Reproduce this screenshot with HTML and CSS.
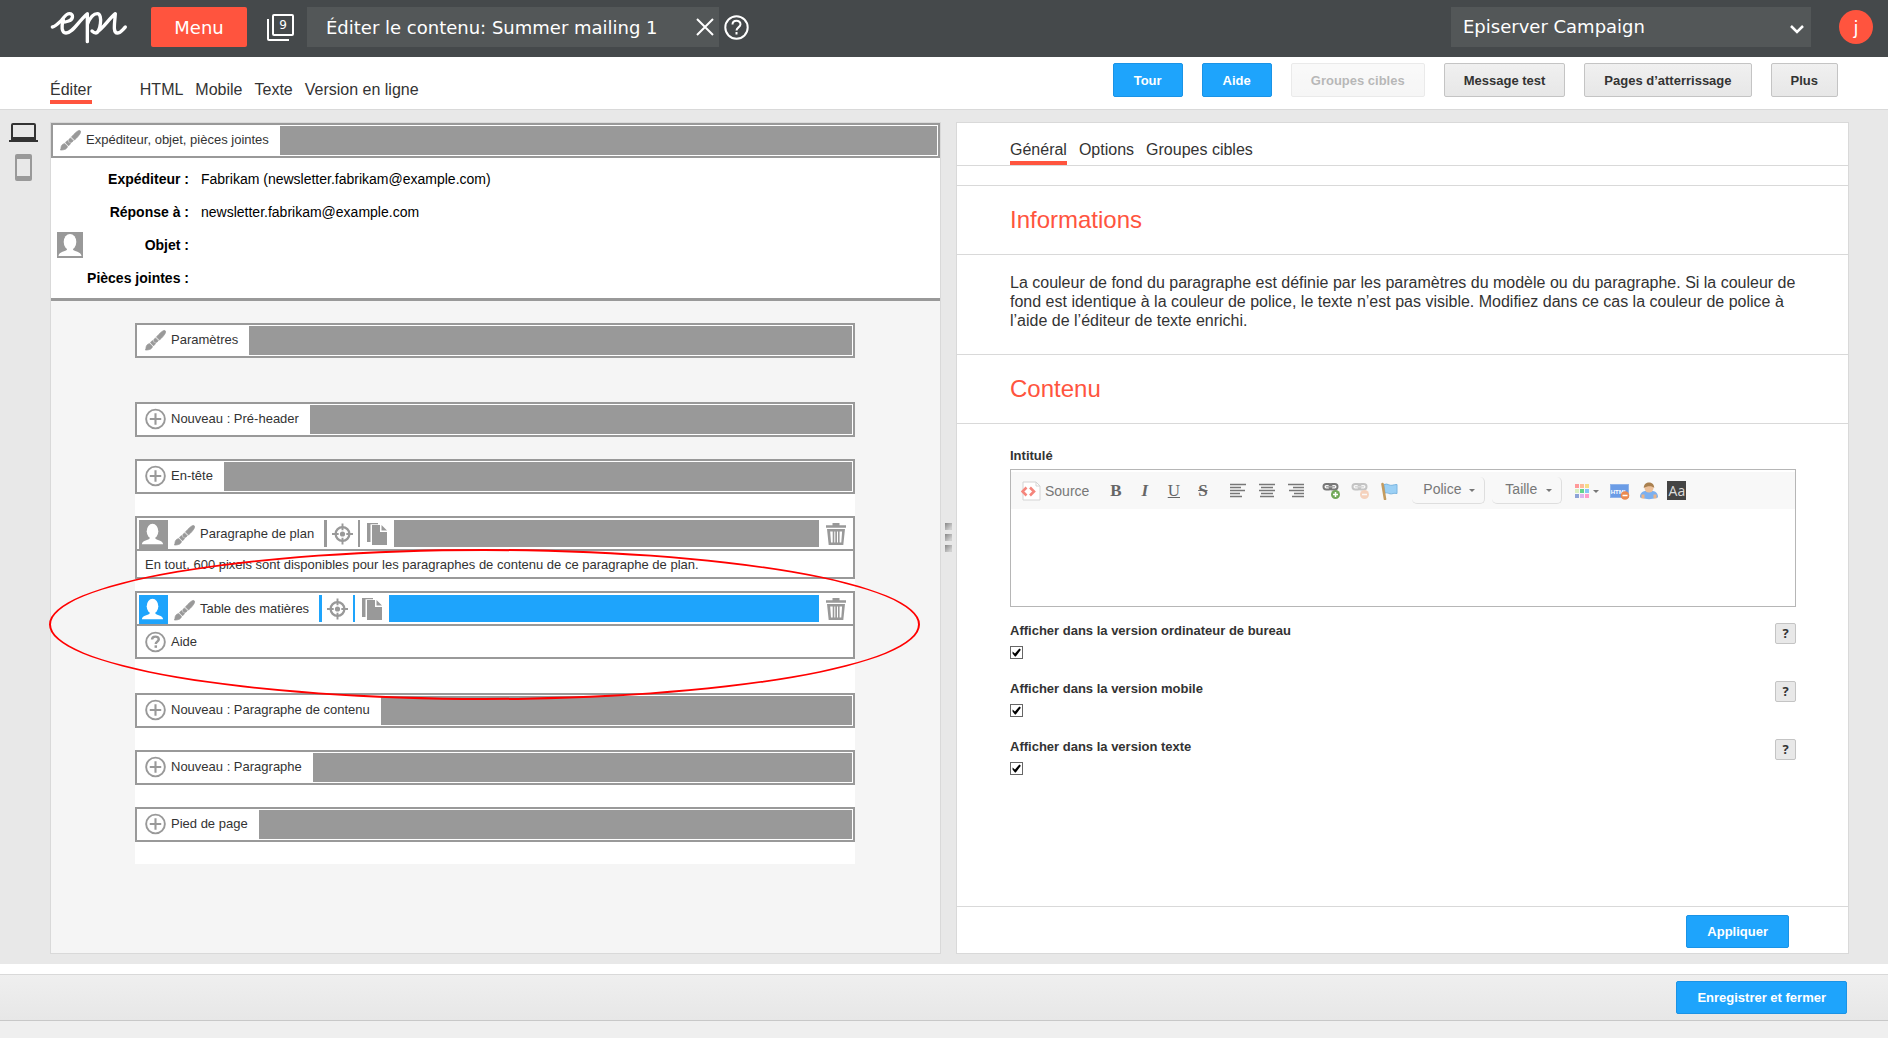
FILE: index.html
```html
<!DOCTYPE html>
<html lang="fr">
<head>
<meta charset="utf-8">
<meta name="viewport" content="width=device-width, initial-scale=1">
<title>Éditer le contenu: Summer mailing 1</title>
<link rel="stylesheet" href="styles.css">
</head>
<body>
<svg class="sprite" aria-hidden="true">
  <symbol id="brush" viewBox="0 0 22 22">
    <g stroke="currentColor" stroke-width=".8" stroke-linejoin="round">
    <path d="M20 1c1.500 0 2 1 1.500 2.200-.8 2.300-3.200 5-6.300 7.800L12 7.800C15 4.500 17.700 1.600 20 1z"/>
    <path d="M11 8.800l3 3-1.400 1.300c-.8.6-2 .5-2.700-.2-.8-.8-.9-2-.2-2.900z"/>
    <path d="M8.300 11.700c.2 1.400 1 2.200 2.600 2.500-.3 1.500-1 2.400-2.200 2.700L5.800 13.900c.5-1.300 1.300-2 2.500-2.200z"/>
    <path d="M5 14.800l2.800 2.900C7.600 20 5 21.500.5 21.500 1.200 20.500.8 19.500 1.300 17.900 1.800 15.900 3.400 14.900 5 14.800z"/>
    </g>
  </symbol>
  <symbol id="plus" viewBox="0 0 22 22">
    <circle cx="11" cy="11" r="9.800" fill="none" stroke="currentColor" stroke-width="2"/>
    <path d="M9.900 5h2.200v4.900H17v2.200h-4.900V17H9.900v-4.900H5V9.900h4.900z"/>
  </symbol>
  <symbol id="question" viewBox="0 0 22 22">
    <circle cx="11" cy="11" r="9.800" fill="none" stroke="currentColor" stroke-width="2"/>
    <path d="M7.400 8.500C7.400 4.300 14.600 4.400 14.400 8.300c-.1 2.300-3.100 2.400-3.100 4.800" fill="none" stroke="currentColor" stroke-width="2.600"/>
    <rect x="10" y="14.500" width="2.600" height="2.600"/>
  </symbol>
  <symbol id="person" viewBox="0 0 26 26">
    <ellipse cx="13" cy="10" rx="6.300" ry="8"/>
    <path d="M10 15h6v2.500c1 2.200 8 1.800 8.500 6.500h-23C2 19.300 9 19.700 10 17.500z"/>
  </symbol>
  <symbol id="target" viewBox="0 0 22 22">
    <circle cx="11" cy="11" r="7.200" fill="none" stroke="currentColor" stroke-width="2.400"/>
    <circle cx="11" cy="11" r="2.700"/>
    <path d="M10 0h2v7h-2zM10 15h2v7h-2zM0 10h7v2H0zM15 10h7v2h-7z"/>
  </symbol>
  <symbol id="copy" viewBox="0 0 20 22">
    <path d="M0 0h11v1.300H3.500V19H0z"/>
    <path d="M5 2h8v7h7v13H5z"/>
    <path d="M14.500 2L20 7.500h-5.500z"/>
  </symbol>
  <symbol id="trash" viewBox="0 0 20 22">
    <path d="M6.500 0h7v2.200H20v2.600H0V2.200h6.500z"/>
    <path fill-rule="evenodd" d="M1 6h18l-1.700 16H2.700zM4.200 8.500l.8 11h1.700v-11zM8.300 8.500v11h1v-11zM11 8.500v11h1v-11zM13.600 8.500v11h1.700l.8-11z"/>
  </symbol>
  <symbol id="chain" viewBox="0 0 18 16">
    <g fill="none" stroke="#777" stroke-width="2">
      <rect x="1.500" y="2" width="8" height="5.500" rx="2.700"/>
      <rect x="7.500" y="2" width="8" height="5.500" rx="2.700"/>
    </g>
    <path d="M4 4.700h9" stroke="#aaa" stroke-width="1.500"/>
  </symbol>
</svg>

<div class="page">
  <header class="topbar">
    <a class="logo" href="#" aria-label="Episerver">
      <svg width="78" height="33" viewBox="0 0 234 99" fill="none" stroke="#fff" stroke-width="10" stroke-linecap="round" stroke-linejoin="round">
        <path d="M7 48C18 46 24 38 34 28 44 17 48 8 58 8c14 0 12 17-2 22-8 3-15 4-20 4M40 26c-6 20-6 40 8 40 20 0 36-34 64-58v84M112 40c8-20 20-32 30-32 18 0 8 58-4 58-6 0-12-6-12-6M140 64C160 52 176 24 196 8c-2 30-8 58 6 58 10 0 14-8 24-18"/>
      </svg>
    </a>
    <button class="menu" type="button">Menu</button>
    <button class="tabs-count" type="button" aria-label="Onglets ouverts">
      <svg width="27" height="27" viewBox="0 0 27 27" fill="none" stroke="#fff" stroke-width="2">
        <rect x="6" y="1" width="20" height="20" rx="1"/>
        <path d="M1 5v20q0 1 1 1h20"/>
        <text class="count" x="16" y="15" text-anchor="middle">9</text>
      </svg>
    </button>
    <div class="current">
      <span>Éditer le contenu: Summer mailing 1</span>
      <button type="button" aria-label="Fermer">
        <svg width="18" height="18" viewBox="0 0 18 18" stroke="#fff" stroke-width="2"><path d="M1 1l16 16M17 1L1 17"/></svg>
      </button>
    </div>
    <button class="tophelp" type="button" aria-label="Aide">
      <svg width="25" height="25" viewBox="0 0 25 25" fill="none" stroke="#fff" stroke-width="2"><circle cx="12.500" cy="12.500" r="11.200"/><path d="M8.500 9.500c0-5 8-5 8-.2 0 3-4 3.200-4 6.200M12.500 17v2.500"/></svg>
    </button>
    <select class="product" aria-label="Produit"><option>Episerver Campaign</option></select>
    <button class="avatar" type="button">j</button>
  </header>

  <div class="subbar">
    <nav class="tabs">
      <a class="active first" href="#">Éditer</a>
      <a href="#">HTML</a>
      <a href="#">Mobile</a>
      <a href="#">Texte</a>
      <a href="#">Version en ligne</a>
    </nav>
    <div class="actions">
      <button class="btn primary" type="button">Tour</button>
      <button class="btn primary" type="button">Aide</button>
      <button class="btn" type="button" disabled>Groupes cibles</button>
      <button class="btn" type="button">Message test</button>
      <button class="btn" type="button">Pages d’atterrissage</button>
      <button class="btn" type="button">Plus</button>
    </div>
  </div>

  <main class="workspace">
    <aside class="devices">
      <button type="button" aria-label="Ordinateur">
        <svg width="29" height="19" viewBox="0 0 29 19"><rect x="3" y="1" width="23" height="14" rx="1" fill="none" stroke="#333" stroke-width="2"/><path d="M2 14h25v3h2v2H0v-2h2z" fill="#333"/></svg>
      </button>
      <button type="button" aria-label="Mobile">
        <svg width="17" height="27" viewBox="0 0 17 27"><path fill="#999" fill-rule="evenodd" d="M2 0h13q2 0 2 2v23q0 2-2 2H2q-2 0-2-2V2q0-2 2-2zM2 5v17h13V5z"/></svg>
      </button>
    </aside>

    <section class="preview">
      <div class="bar wide"><a class="bar-label" href="#"><svg class="icon"><use href="#brush"/></svg><span>Expéditeur, objet, pièces jointes</span></a></div>
      <dl class="meta">
        <dt>Expéditeur :</dt><dd>Fabrikam (newsletter.fabrikam@example.com)</dd>
        <dt>Réponse à :</dt><dd>newsletter.fabrikam@example.com</dd>
        <dt><svg class="badge"><use href="#person"/></svg>Objet :</dt><dd></dd>
        <dt>Pièces jointes :</dt><dd></dd>
      </dl>
      <div class="canvas">
        <div class="bar settings"><a class="bar-label" href="#"><svg class="icon"><use href="#brush"/></svg><span>Paramètres</span></a></div>
        <div class="bar"><a class="bar-label" href="#"><svg class="icon"><use href="#plus"/></svg><span>Nouveau : Pré-header</span></a></div>
        <div class="bar"><a class="bar-label" href="#"><svg class="icon"><use href="#plus"/></svg><span>En-tête</span></a></div>
        <div class="sheet">
          <article class="block">
            <div class="block-head">
              <svg class="who"><use href="#person"/></svg>
              <a class="bar-label" href="#"><svg class="icon"><use href="#brush"/></svg><span>Paragraphe de plan</span></a>
              <button class="tool aim" type="button" aria-label="Cibler"><svg class="icon"><use href="#target"/></svg></button>
              <button class="tool dup" type="button" aria-label="Copier"><svg class="icon"><use href="#copy"/></svg></button>
              <span class="fill"></span>
              <button class="tool bin" type="button" aria-label="Supprimer"><svg class="icon"><use href="#trash"/></svg></button>
            </div>
            <p class="block-note">En tout, 600 pixels sont disponibles pour les paragraphes de contenu de ce paragraphe de plan.</p>
          </article>
          <article class="block selected">
            <div class="block-head">
              <svg class="who"><use href="#person"/></svg>
              <a class="bar-label" href="#"><svg class="icon"><use href="#brush"/></svg><span>Table des matières</span></a>
              <button class="tool aim" type="button" aria-label="Cibler"><svg class="icon"><use href="#target"/></svg></button>
              <button class="tool dup" type="button" aria-label="Copier"><svg class="icon"><use href="#copy"/></svg></button>
              <span class="fill"></span>
              <button class="tool bin" type="button" aria-label="Supprimer"><svg class="icon"><use href="#trash"/></svg></button>
            </div>
            <a class="block-help" href="#"><svg class="icon"><use href="#question"/></svg>Aide</a>
          </article>
          <div class="bar"><a class="bar-label" href="#"><svg class="icon"><use href="#plus"/></svg><span>Nouveau : Paragraphe de contenu</span></a></div>
          <div class="bar"><a class="bar-label" href="#"><svg class="icon"><use href="#plus"/></svg><span>Nouveau : Paragraphe</span></a></div>
          <div class="bar"><a class="bar-label" href="#"><svg class="icon"><use href="#plus"/></svg><span>Pied de page</span></a></div>
          <div class="highlight" aria-hidden="true"></div>
        </div>
      </div>
    </section>

    <div class="splitter"><i></i><i></i><i></i></div>

    <section class="editor">
      <nav class="tabs editor-tabs">
        <a class="active" href="#">Général</a>
        <a href="#">Options</a>
        <a href="#">Groupes cibles</a>
      </nav>
      <h2>Informations</h2>
      <p class="info">La couleur de fond du paragraphe est définie par les paramètres du modèle ou du paragraphe. Si la couleur de fond est identique à la couleur de police, le texte n’est pas visible. Modifiez dans ce cas la couleur de police à l’aide de l’éditeur de texte enrichi.</p>
      <h2>Contenu</h2>
      <form class="fields" id="content-form">
        <label class="caption" for="title-text">Intitulé</label>
        <div class="rte">
          <div class="rte-bar">
            <button class="source" type="button"><svg width="20" height="20" viewBox="0 0 20 20"><path d="M2 1h13l4 4v14H2z" fill="#fff" stroke="#d4d4d4"/><path d="M15 1v4h4" fill="none" stroke="#d4d4d4"/><path d="M5.500 6.500L1.500 10.500l4 4M9 6.500l4 4-4 4" fill="none" stroke="#f5857c" stroke-width="2.600"/></svg>Source</button>
            <div class="group">
              <button type="button" class="b">B</button>
              <button type="button" class="i">I</button>
              <button type="button" class="u">U</button>
              <button type="button" class="s">S</button>
            </div>
            <div class="group">
              <button type="button" aria-label="Gauche"><svg width="16" height="16" viewBox="0 0 16 16"><path d="M0 1.500h16M0 4.500h11M0 7.500h15M0 10.500h10M0 13.500h12" stroke="#777" stroke-width="1.500"/></svg></button>
              <button type="button" aria-label="Centrer"><svg width="16" height="16" viewBox="0 0 16 16"><path d="M0 1.500h16M2 4.500h12M0 7.500h16M2 10.500h12M1 13.500h14" stroke="#777" stroke-width="1.500"/></svg></button>
              <button type="button" aria-label="Droite"><svg width="16" height="16" viewBox="0 0 16 16"><path d="M0 1.500h16M5 4.500h11M1 7.500h15M6 10.500h10M4 13.500h12" stroke="#777" stroke-width="1.500"/></svg></button>
            </div>
            <div class="group links">
              <button type="button" aria-label="Lien"><svg width="18" height="18" viewBox="0 0 18 18"><use href="#chain" width="18" height="16"/><circle cx="13.500" cy="12.500" r="4.500" fill="#71a859"/><path d="M11 12.500h5M13.500 10v5" stroke="#fff" stroke-width="1.500"/></svg></button>
              <button type="button" aria-label="Supprimer le lien" disabled><svg class="faded" width="18" height="18" viewBox="0 0 18 18"><use href="#chain" width="18" height="16"/><circle cx="13.500" cy="12.500" r="4.500" fill="#f29b66"/><path d="M11 12.500h5" stroke="#fff" stroke-width="1.500"/></svg></button>
              <button type="button" aria-label="Ancre"><svg width="18" height="18" viewBox="0 0 18 18"><path d="M4 2.500c4-1.500 5 1.500 8 .8 2-.4 3-.8 5-.8v9c-3-.8-5 .8-7 .3-2.500-.6-3-1.300-5-.8z" fill="#9bd0f5" stroke="#7ab5e0"/><path d="M2.500 2l2.500 15" stroke="#c39b5f" stroke-width="2.600" stroke-linecap="round"/></svg></button>
            </div>
            <select class="combo" aria-label="Police"><option>Police</option></select>
            <select class="combo size" aria-label="Taille"><option>Taille</option></select>
            <div class="group">
              <button class="palette" type="button" aria-label="Couleur"><svg width="24" height="14" viewBox="0 0 24 14"><path fill="#f99" d="M0 0h4v4H0z"/><path fill="#fb9" d="M5 0h4v4H5z"/><path fill="#f5dd88" d="M10 0h4v4h-4z"/><path fill="#d8efc0" d="M0 5h4v4H0z"/><path fill="#62d68c" d="M5 5h4v4H5z"/><path fill="#87c5f5" d="M10 5h4v4h-4z"/><path fill="#8da3d6" d="M0 10h4v4H0z"/><path fill="#dcb5ee" d="M5 10h4v4H5z"/><path fill="#ff9ccb" d="M10 10h4v4h-4z"/><path fill="#777" d="M18 6h6l-3 3z"/></svg></button>
              <button type="button" aria-label="HTML"><svg width="20" height="18" viewBox="0 0 20 18"><rect x=".5" y="2.500" width="18" height="13" fill="#6b9ce6" stroke="#90b4ea"/><text class="tiny" x="9" y="12" text-anchor="middle">HTML</text><circle cx="15" cy="13.500" r="4.300" fill="#ec8a50"/><path d="M12.500 13.500h5" stroke="#fff" stroke-width="1.500"/></svg></button>
              <button type="button" aria-label="Personnalisation"><svg width="18" height="18" viewBox="0 0 18 18"><path d="M0 15c0-4 2.500-5.500 5-6h8c2.500.5 5 2 5 6-1 1.500-2 1-3 1-2 1.500-10 1.500-12 0-1 0-2 .5-3-1z" fill="#7cb0f0"/><path d="M3 12.500v4M15 12.500v4" stroke="#e8b48a" stroke-width="3"/><circle cx="9" cy="6" r="4.500" fill="#ecc09a"/><path d="M3.800 6C3.500-1.500 14.500-1.500 14.200 6 12 3.500 7 4 3.800 6z" fill="#a9804f"/></svg></button>
              <button type="button" class="aa">Aa</button>
            </div>
          </div>
          <textarea id="title-text"></textarea>
        </div>
        <div class="option"><div><label for="opt-desktop">Afficher dans la version ordinateur de bureau</label><input id="opt-desktop" type="checkbox" checked></div><button type="button" class="hint">?</button></div>
        <div class="option"><div><label for="opt-mobile">Afficher dans la version mobile</label><input id="opt-mobile" type="checkbox" checked></div><button type="button" class="hint">?</button></div>
        <div class="option"><div><label for="opt-text">Afficher dans la version texte</label><input id="opt-text" type="checkbox" checked></div><button type="button" class="hint">?</button></div>
      </form>
      <div class="apply"><button class="btn primary" type="submit" form="content-form">Appliquer</button></div>
    </section>
  </main>

  <footer class="savebar"><button class="btn primary" type="button">Enregistrer et fermer</button></footer>
</div>
</body>
</html>
```

FILE: styles.css
```css
* { box-sizing: border-box; }

body {
  margin: 0;
  background: #efefef;
  color: #333;
  font-family: "Liberation Sans", Arial, sans-serif;
  font-size: 13px;
}

a { color: inherit; text-decoration: none; }

button, select, textarea { font: inherit; color: inherit; }

button {
  margin: 0;
  padding: 0;
  border: 0;
  background: none;
  cursor: pointer;
}

svg { display: block; flex: none; }

.sprite { display: none; }

.page {
  display: flex;
  flex-direction: column;
  min-height: 100vh;
  padding-bottom: 17px;
}

/* Top bar */
.topbar {
  display: flex;
  align-items: center;
  height: 57px;
  padding: 0 15px 3px 50px;
  background: #45494b;
  color: #fff;
  font-family: "DejaVu Sans", Verdana, sans-serif;
  font-size: 18px;
}

.logo { width: 101px; }

.menu {
  width: 96px;
  height: 40px;
  border-radius: 2px;
  background: #ff543e;
}

.tabs-count { margin: 0 13px 0 20px; }

.count {
  fill: #fff;
  stroke: none;
  font-size: 12px;
}

.current {
  display: flex;
  align-items: center;
  justify-content: space-between;
  width: 412px;
  height: 40px;
  padding: 0 5px 0 19px;
  background: #535758;
}

.tophelp { margin-left: 5px; }

.product {
  width: 360px;
  height: 40px;
  margin-left: auto;
  padding: 0 12px 2px;
  border: 0;
  border-radius: 0;
  appearance: none;
  background: #535758 url("data:image/svg+xml,%3Csvg xmlns='http://www.w3.org/2000/svg' width='14' height='9'%3E%3Cpath d='M1 1l6 6 6-6' fill='none' stroke='white' stroke-width='2.500'/%3E%3C/svg%3E") no-repeat right 7px top 18px;
}

.avatar {
  width: 34px;
  height: 34px;
  margin-left: 28px;
  border-radius: 50%;
  background: #ff543e;
}

/* Secondary bar */
.subbar {
  display: flex;
  justify-content: space-between;
  height: 53px;
  padding: 0 50px;
  border-bottom: 1px solid #d9d9d9;
  background: #fff;
}

.tabs {
  display: flex;
  gap: 12px;
  align-items: flex-end;
  font-size: 16px;
  line-height: 20px;
}

.tabs a { border-bottom: 4px solid transparent; }

.tabs a.active { border-color: #ff543e; }

.subbar .tabs { padding-bottom: 5px; }

.subbar .first { margin-right: 36px; }

.actions {
  display: flex;
  gap: 19px;
  padding-top: 6px;
}

.btn {
  height: 34px;
  padding: 0 19px;
  border: 1px solid #c4c4c4;
  border-radius: 2px;
  background: linear-gradient(#f0f0f0, #e7e7e7);
  font-weight: bold;
}

.btn:disabled { opacity: .35; }

.btn.primary {
  padding: 0 20px;
  border-color: #1a93e6;
  background: #1ea4fc;
  color: #fff;
}

/* Workspace */
.workspace {
  display: grid;
  flex: 1;
  grid-template-columns: 50px minmax(0, 891fr) 15px minmax(0, 893fr) 39px;
  padding: 12px 0 10px;
  border-bottom: 10px solid #fff;
  background: #e8e8e8;
}

.devices {
  display: flex;
  flex-direction: column;
  align-items: center;
  gap: 12px;
  padding: 1px 3px 0 0;
}

.preview {
  border: 1px solid #d9d9d9;
  background: #f5f5f5;
}

.bar {
  display: flex;
  height: 35px;
  border: solid #999;
  border-width: 2px 2px 3px 3px;
  background: #999;
  outline: 1px solid #fff;
  outline-offset: -3px;
}

.bar.wide { border-width: 2px 3px 3px 2px; }

.bar-label {
  display: flex;
  align-items: center;
  gap: 5px;
  height: 30px;
  padding: 0 11px 0 7px;
  background: #fff;
}

.bar-label span { padding-bottom: 2px; }

.icon {
  width: 21px;
  height: 22px;
  color: #999;
  fill: #999;
}

.meta {
  display: grid;
  grid-template-columns: 138px 1fr;
  grid-auto-rows: 33px;
  align-items: center;
  column-gap: 12px;
  margin: 0;
  padding: 4px 0;
  border-bottom: 3px solid #999;
  background: #fff;
  color: #000;
  font-size: 14px;
}

.meta dt {
  display: flex;
  align-items: center;
  justify-content: flex-end;
  font-weight: bold;
}

.meta dd { margin: 0; }

.badge {
  width: 26px;
  height: 26px;
  margin: 0 auto 0 6px;
  background: #999;
  fill: #fff;
}

.canvas {
  display: flex;
  flex-direction: column;
  gap: 22px;
  padding: 22px 85px 0 84px;
}

.settings { margin-bottom: 22px; }

.sheet {
  position: relative;
  margin-top: -22px;
  padding: 22px 0;
  background: #fff;
}

.sheet .bar + .bar { margin-top: 22px; }

.block {
  margin-bottom: 12px;
  border: 2px solid #999;
}

.selected { margin-bottom: 34px; }

.block-head {
  display: flex;
  height: 33px;
  padding: 2px;
  border-bottom: 2px solid #999;
}

.block-head .bar-label {
  height: 29px;
  padding: 0 10px 0 6px;
}

.who {
  width: 29px;
  height: 29px;
  padding: 2px 3px 3px 1px;
  background: #999;
  fill: #fff;
}

.tool {
  display: flex;
  align-items: center;
  border: solid #999;
  border-width: 0;
}

.aim {
  padding: 0 5px;
  border-width: 0 2px 0 3px;
}

.dup { padding: 0 7px; }

.dup .icon, .bin .icon { width: 20px; }

.bin { padding: 0 5px 0 7px; }

.fill { flex: 1; background: #999; }

.selected .who, .selected .fill { background: #1ea4fc; }

.selected .aim { border-color: #1ea4fc; }

.block-note {
  margin: 0;
  padding: 1px 8px 0;
  line-height: 25px;
}

.block-help {
  display: flex;
  align-items: center;
  gap: 5px;
  height: 31px;
  padding: 0 8px;
}

.highlight {
  position: absolute;
  top: 55px;
  left: -86px;
  width: 871px;
  height: 151px;
  border: 2px solid #f00;
  border-radius: 50%;
  pointer-events: none;
}

.splitter {
  display: flex;
  flex-direction: column;
  align-items: center;
  justify-content: center;
  gap: 4px;
  padding-bottom: 2px;
}

.splitter i {
  width: 7px;
  height: 7px;
  background: linear-gradient(135deg, #888, #d0d0d0 80%);
}

/* Editor panel */
.editor {
  display: flex;
  flex-direction: column;
  border: 1px solid #d9d9d9;
  background: #fff;
}

.editor-tabs {
  height: 43px;
  margin-bottom: 19px;
  padding-left: 53px;
  border-bottom: 1px solid #d9d9d9;
}

.editor-tabs a { padding-bottom: 1px; }

.editor h2 {
  margin: 0;
  padding: 0 53px;
  border: solid #d9d9d9;
  border-width: 1px 0;
  color: #ff543e;
  font-size: 24px;
  font-weight: normal;
  line-height: 68px;
}

.info {
  margin: 0;
  padding: 18px 42px 24px 53px;
  font-size: 16px;
  line-height: 19px;
}

.fields { flex: 1; padding: 23px 52px 0 53px; }

.caption {
  display: block;
  font-weight: bold;
  line-height: 18px;
}

.rte {
  margin: 4px 0 16px;
  border: 1px solid #b6b6b6;
}

.rte-bar {
  display: flex;
  align-items: center;
  height: 39px;
  padding-left: 10px;
  border-top: 2px solid #fff;
  background: #f8f8f8;
  color: #777;
  font-size: 14px;
}

.source {
  display: flex;
  align-items: center;
  gap: 4px;
  margin-right: 12px;
}

.group {
  display: flex;
  align-items: center;
  margin-right: 6px;
}

.group.links { margin-right: 9px; }

.group button {
  display: flex;
  align-items: center;
  justify-content: center;
  width: 29px;
  height: 24px;
}

.b, .i, .u, .s {
  color: #666;
  font-family: "Liberation Serif", "Times New Roman", serif;
  font-size: 17px;
}

.b, .i, .s { font-weight: bold; }

.i { font-style: italic; }

.u { text-decoration: underline; }

.s { text-decoration: line-through; }

.faded { opacity: .4; }

.combo {
  width: 73px;
  height: 27px;
  margin: 0 7px 0 0;
  padding: 0 11px 2px;
  border: solid #dedede;
  border-width: 0 1px 1px 0;
  border-radius: 5px;
  appearance: none;
  background: url("data:image/svg+xml,%3Csvg xmlns='http://www.w3.org/2000/svg' width='6' height='3'%3E%3Cpath d='M0 0h6L3 3z' fill='%23777'/%3E%3C/svg%3E") no-repeat right 9px top 12px;
}

.size { width: 70px; padding-left: 13px; }

.group .palette { width: 36px; }

.group .aa {
  width: 19px;
  height: 19px;
  margin-left: 4px;
  background: #444;
  color: #ddd;
  font-family: "Open Sans", sans-serif;
  line-height: 19px;
}

.tiny {
  fill: #fff;
  font-size: 6px;
  font-weight: bold;
}

.rte textarea {
  display: block;
  width: 100%;
  height: 97px;
  border: 0;
  outline: 0;
  resize: none;
}

.option {
  display: flex;
  align-items: flex-start;
  justify-content: space-between;
  height: 58px;
  font-weight: bold;
}

.option label { display: block; line-height: 16px; }

.option input {
  display: block;
  width: 13px;
  height: 13px;
  margin: 7px 0 0;
  border: 1px solid #666;
  appearance: none;
  background: #fff;
}

.option input:checked::before {
  display: block;
  height: 11px;
  background: #000;
  clip-path: polygon(14% 40%, 36% 58%, 76% 14%, 90% 24%, 44% 86%, 36% 86%, 14% 60%);
  content: "";
}

.hint {
  width: 21px;
  height: 21px;
  border: 1px solid #c4c4c4;
  border-radius: 2px;
  background: #e8e8e8;
  font-family: "Open Sans", sans-serif;
  font-weight: bold;
  line-height: 19px;
}

.apply {
  height: 47px;
  padding: 8px 59px 0;
  border-top: 1px solid #d9d9d9;
  text-align: right;
}

.apply .btn, .savebar .btn { height: 33px; }

.savebar {
  height: 47px;
  padding: 6px 41px 0;
  border: solid #d9d9d9;
  border-width: 1px 0;
  border-bottom-color: #c8c8c8;
  background: linear-gradient(#efefef, #e7e7e7);
  text-align: right;
}
```
